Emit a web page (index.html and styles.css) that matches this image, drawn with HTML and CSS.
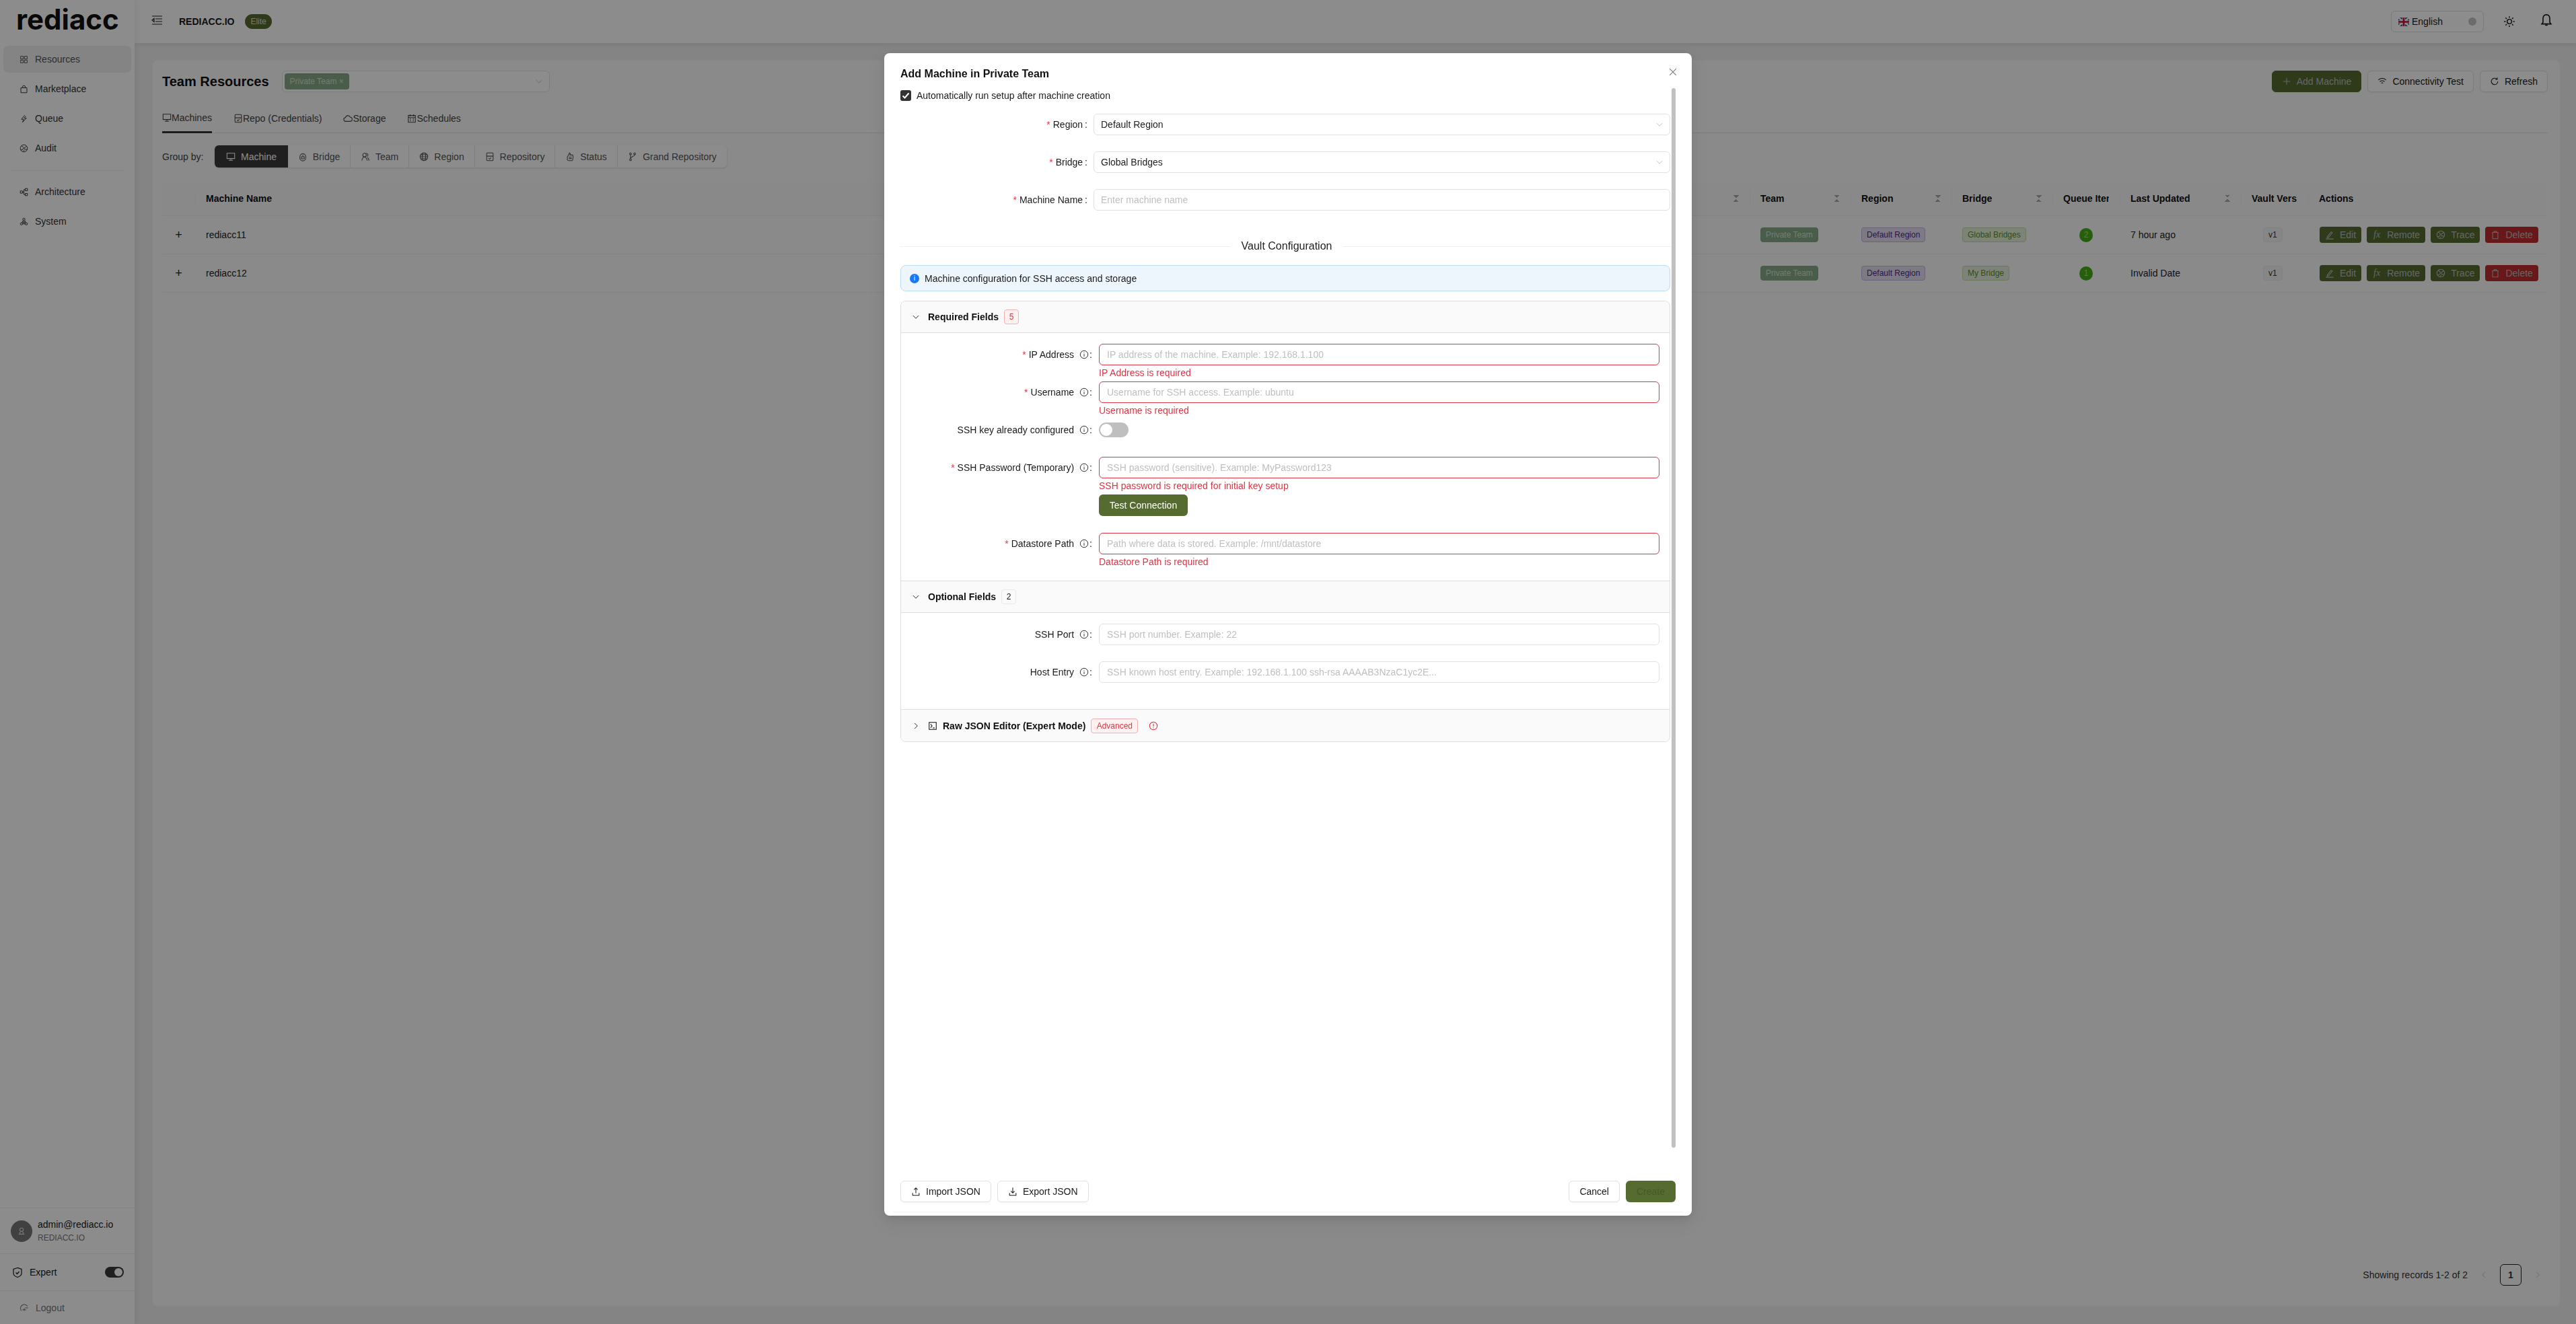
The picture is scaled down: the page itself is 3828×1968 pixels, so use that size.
FILE: index.html
```html
<!DOCTYPE html>
<html lang="en">
<head>
    <meta charset="UTF-8">
    <title>Rediacc - Team Resources</title>
    <link rel="stylesheet" href="styles.css">
</head>
<body>
    <svg class="icon-defs" xmlns="http://www.w3.org/2000/svg">
        <symbol id="i-grid" viewBox="0 0 16 16"><path d="M2 2h5v5H2zM9 2h5v5H9zM2 9h5v5H2zM9 9h5v5H9z"/></symbol>
        <symbol id="i-bag" viewBox="0 0 16 16"><path d="M2.500 5.500h11v9h-11zM5.500 5.500V4a2.500 2.500 0 0 1 5 0v1.500"/></symbol>
        <symbol id="i-bolt" viewBox="0 0 16 16"><path d="M9.500 1.500 3.500 9h4l-2 5.500L12.500 7h-4l3-4"/></symbol>
        <symbol id="i-swirl" viewBox="0 0 16 16"><circle cx="8" cy="8" r="6.500"/><path d="M3.500 3.500c3 1 4.500 3 3.500 5s-3 3-5 2M13.500 4c-2 1.500-4 1.500-4.500 3.500s2 3 5 2.500M7 14c0-1.500 1-2.500 2.500-3"/></symbol>
        <symbol id="i-partition" viewBox="0 0 16 16"><path d="M1.500 6h4v4h-4zM10.500 1.500h4v4h-4zM10.500 10.500h4v4h-4zM5.500 8H8M8 3.500v9M8 3.500h2.500M8 12.500h2.500"/></symbol>
        <symbol id="i-cluster" viewBox="0 0 16 16"><circle cx="8" cy="3.500" r="2"/><circle cx="3.500" cy="12" r="2"/><circle cx="12.500" cy="12" r="2"/><path d="M6.500 5.500 4.500 10M9.500 5.500l2 4.500M5.500 12h5M8 7l2 3H6z"/></symbol>
        <symbol id="i-desktop" viewBox="0 0 16 16"><path d="M1.500 2h13v9h-13zM8 11v3M4.500 14h7"/></symbol>
        <symbol id="i-bridge" viewBox="0 0 16 16"><path d="M3 8a5 5 0 0 1 10 0v2a5 5 0 0 1-10 0zM5.500 8h5v3.500h-5zM8 5v3"/></symbol>
        <symbol id="i-team" viewBox="0 0 16 16"><circle cx="6.500" cy="5" r="3"/><path d="M2 14.500c.5-3.500 2.500-6 4.500-6s4 2.500 4.500 6M9.500 2a3 3 0 0 1 1.500 5.500M11.500 9c1.500 1 2.300 3 2.500 5.500"/></symbol>
        <symbol id="i-globe" viewBox="0 0 16 16"><circle cx="8" cy="8" r="6.500"/><ellipse cx="8" cy="8" rx="3" ry="6.500"/><path d="M1.500 8h13M2.500 4.500h11M2.500 11.500h11"/></symbol>
        <symbol id="i-repo" viewBox="0 0 16 16"><path d="M4 1.500h8a1.500 1.500 0 0 1 1.500 1.500v10a1.500 1.500 0 0 1-1.500 1.500H4A1.500 1.500 0 0 1 2.500 13V3A1.500 1.500 0 0 1 4 1.500zM2.500 7h11M6 10.500l1.500 1.500L10 9.500"/></symbol>
        <symbol id="i-hand" viewBox="0 0 16 16"><path d="M3.500 8.500 6 4l1-2.500 1.500 1L8 5h4.500l1 3-1 5.500a1.500 1.500 0 0 1-1.500 1H5.500a2 2 0 0 1-2-2zM6 8.500h5M6 11h5"/></symbol>
        <symbol id="i-branch" viewBox="0 0 16 16"><circle cx="4.500" cy="3" r="1.500"/><circle cx="4.500" cy="13" r="1.500"/><circle cx="11.500" cy="3" r="1.500"/><path d="M4.500 4.500v7M11.500 4.500c0 3.500-7 3-7 6.500"/></symbol>
        <symbol id="i-cloud" viewBox="0 0 16 16"><path d="M4.500 13a3.250 3.250 0 0 1-.5-6.500 4.200 4.200 0 0 1 8-.5 3.500 3.500 0 0 1-.5 7z"/></symbol>
        <symbol id="i-calendar" viewBox="0 0 16 16"><path d="M2 3h12v11.500H2zM2 6.500h12M5 1v3.500M11 1v3.500M4.500 9h2M9.500 9h2M4.500 12h2M9.500 12h2"/></symbol>
        <symbol id="i-wifi" viewBox="0 0 16 16"><path d="M1.500 5.500a9.500 9.500 0 0 1 13 0M4 8.500a6 6 0 0 1 8 0M6.500 11a2.500 2.500 0 0 1 3 0"/></symbol>
        <symbol id="i-reload" viewBox="0 0 16 16"><path d="M13.500 8a5.500 5.500 0 1 1-1.600-3.900M12.500 1.500v3h-3"/></symbol>
        <symbol id="i-plus" viewBox="0 0 16 16"><path d="M8 2v12M2 8h12"/></symbol>
        <symbol id="i-edit" viewBox="0 0 16 16"><path d="M4 11 10.500 3l2 1.500L6 12.500l-2.500.5zM1.500 15h13"/></symbol>
        <symbol id="i-trash" viewBox="0 0 16 16"><path d="M2.500 4h11M6 4V2h4v2M3.500 4v10.500h9V4"/></symbol>
        <symbol id="i-info" viewBox="0 0 16 16"><circle cx="8" cy="8" r="6.500"/><path d="M8 7v4.500M8 4.500v1"/></symbol>
        <symbol id="i-warn" viewBox="0 0 16 16"><circle cx="8" cy="8" r="6.500"/><path d="M8 4v5M8 10.500v1.500"/></symbol>
        <symbol id="i-sun" viewBox="0 0 16 16"><circle cx="8" cy="8" r="3"/><path d="M8 1v2M8 13v2M1 8h2M13 8h2M3 3l1.400 1.400M11.600 11.600 13 13M3 13l1.400-1.400M11.600 4.400 13 3"/></symbol>
        <symbol id="i-bell" viewBox="0 0 16 16"><path d="M8 1.500c-2.800 0-4 2-4 4.500v4.500L2.500 12.500h11L12 10.500V6c0-2.500-1.200-4.500-4-4.500zM6.500 14h3"/></symbol>
        <symbol id="i-down" viewBox="0 0 16 16"><path d="M2.500 5.500 8 11l5.500-5.500"/></symbol>
        <symbol id="i-right" viewBox="0 0 16 16"><path d="M5.500 2.500 11 8l-5.500 5.500"/></symbol>
        <symbol id="i-left" viewBox="0 0 16 16"><path d="M10.500 2.500 5 8l5.500 5.500"/></symbol>
        <symbol id="i-close" viewBox="0 0 16 16"><path d="M2.500 2.500l11 11M13.500 2.500l-11 11"/></symbol>
        <symbol id="i-user" viewBox="0 0 16 16"><circle cx="8" cy="5.500" r="3"/><path d="M6.500 8.500 4 13h8L9.500 8.500"/></symbol>
        <symbol id="i-shield" viewBox="0 0 16 16"><path d="M8 1 2 3v6c0 3 3 5 6 6 3-1 6-3 6-6V3zM5.500 8l2 2 3-3.500"/></symbol>
        <symbol id="i-logout" viewBox="0 0 16 16"><path d="M13.500 5A6.500 6.500 0 1 0 3 13M5 12c1-2 5-2 6 0M8 8.500v5M14.500 8h-5"/></symbol>
        <symbol id="i-upload" viewBox="0 0 16 16"><path d="M8 11V2M5 5l3-3 3 3M2.500 10.500v4h11v-4"/></symbol>
        <symbol id="i-download" viewBox="0 0 16 16"><path d="M8 1.500v9M5 7.500l3 3 3-3M2.500 10.500v4h11v-4"/></symbol>
        <symbol id="i-code" viewBox="0 0 16 16"><path d="M2 2h12v12H2zM4.500 5 7 8l-2.500 3M8 11.500h3.500"/></symbol>
    </svg>

    <div class="app">
        <aside class="sidebar">
            <div class="logo">rediacc</div>
            <nav class="nav">
                <a class="nav-item active"><svg class="ic"><use href="#i-grid"/></svg>Resources</a>
                <a class="nav-item"><svg class="ic"><use href="#i-bag"/></svg>Marketplace</a>
                <a class="nav-item"><svg class="ic"><use href="#i-bolt"/></svg>Queue</a>
                <a class="nav-item"><svg class="ic"><use href="#i-swirl"/></svg>Audit</a>
                <div class="nav-divider"></div>
                <a class="nav-item"><svg class="ic"><use href="#i-partition"/></svg>Architecture</a>
                <a class="nav-item"><svg class="ic"><use href="#i-cluster"/></svg>System</a>
            </nav>
            <div class="side-foot">
                <div class="user-box">
                    <div class="avatar"><svg class="ic"><use href="#i-user"/></svg></div>
                    <div>
                        <div class="user-name">admin@rediacc.io</div>
                        <div class="user-org">REDIACC.IO</div>
                    </div>
                </div>
                <div class="expert-row">
                    <svg class="ic shield"><use href="#i-shield"/></svg>
                    <span>Expert</span>
                    <span class="mini-switch"></span>
                </div>
                <a class="logout"><svg class="ic"><use href="#i-logout"/></svg>Logout</a>
            </div>
        </aside>

        <div class="right">
            <header class="topbar">
                <svg class="hamburger" viewBox="0 0 16 14"><path d="M1 1h15M6 5h10M6 9h10M1 13h15M4 4.500 1 7l3 2.500z"/></svg>
                <strong class="org">REDIACC.IO</strong>
                <span class="elite">Elite</span>
                <div class="top-tools">
                    <div class="lang">
                        <svg class="flag" viewBox="0 0 18 14"><rect width="18" height="14" fill="#22357e"/><path d="M0 0l18 14M18 0 0 14" stroke="#fff" stroke-width="3"/><path d="M9 0v14M0 7h18" stroke="#fff" stroke-width="5"/><path d="M9 0v14M0 7h18" stroke="#c8102e" stroke-width="3"/></svg>
                        <span>English</span>
                        <span class="lang-dot"></span>
                    </div>
                    <svg class="ic tool"><use href="#i-sun"/></svg>
                    <svg class="ic tool bell"><use href="#i-bell"/></svg>
                </div>
            </header>

            <main class="main">
                <section class="card">
                    <div class="card-head">
                        <h1>Team Resources</h1>
                        <div class="team-select">
                            <span class="team-tag">Private Team ×</span>
                            <svg class="ic chev"><use href="#i-down"/></svg>
                        </div>
                        <div class="head-actions">
                            <button class="btn primary"><svg class="ic"><use href="#i-plus"/></svg>Add Machine</button>
                            <button class="btn"><svg class="ic"><use href="#i-wifi"/></svg>Connectivity Test</button>
                            <button class="btn"><svg class="ic"><use href="#i-reload"/></svg>Refresh</button>
                        </div>
                    </div>

                    <div class="tabs">
                        <a class="tab active"><svg class="ic"><use href="#i-desktop"/></svg>Machines</a>
                        <a class="tab"><svg class="ic"><use href="#i-repo"/></svg>Repo (Credentials)</a>
                        <a class="tab"><svg class="ic"><use href="#i-cloud"/></svg>Storage</a>
                        <a class="tab"><svg class="ic"><use href="#i-calendar"/></svg>Schedules</a>
                    </div>

                    <div class="group-row">
                        <span class="group-label">Group by:</span>
                        <div class="segments">
                            <a class="seg active seg-machine"><svg class="ic"><use href="#i-desktop"/></svg>Machine</a>
                            <a class="seg seg-bridge"><svg class="ic"><use href="#i-bridge"/></svg>Bridge</a>
                            <a class="seg seg-team"><svg class="ic"><use href="#i-team"/></svg>Team</a>
                            <a class="seg seg-region"><svg class="ic"><use href="#i-globe"/></svg>Region</a>
                            <a class="seg seg-repo"><svg class="ic"><use href="#i-repo"/></svg>Repository</a>
                            <a class="seg seg-status"><svg class="ic"><use href="#i-hand"/></svg>Status</a>
                            <a class="seg seg-grand"><svg class="ic"><use href="#i-branch"/></svg>Grand Repository</a>
                        </div>
                    </div>

                    <div class="table">
                        <div class="tr th">
                            <div></div>
                            <div class="td between">Machine Name<span class="sort"></span></div>
                            <div class="td between">Team<span class="sort"></span></div>
                            <div class="td between">Region<span class="sort"></span></div>
                            <div class="td between">Bridge<span class="sort"></span></div>
                            <div class="td"><span class="clip clip-queue">Queue Items</span></div>
                            <div class="td between">Last Updated<span class="sort"></span></div>
                            <div class="td"><span class="clip clip-vault">Vault Version</span></div>
                            <div class="td">Actions</div>
                        </div>
                        <div class="tr">
                            <div class="td expand">+</div>
                            <div class="td">rediacc11</div>
                            <div class="td"><span class="tag tag-team">Private Team</span></div>
                            <div class="td"><span class="tag tag-region">Default Region</span></div>
                            <div class="td"><span class="tag tag-bridge">Global Bridges</span></div>
                            <div class="td"><span class="count">2</span></div>
                            <div class="td">7 hour ago</div>
                            <div class="td"><span class="tag tag-ver">v1</span></div>
                            <div class="td actions">
                                <button class="act"><svg class="ic"><use href="#i-edit"/></svg>Edit</button>
                                <button class="act"><i class="fx">fx</i>Remote</button>
                                <button class="act"><svg class="ic"><use href="#i-swirl"/></svg>Trace</button>
                                <button class="act danger"><svg class="ic"><use href="#i-trash"/></svg>Delete</button>
                            </div>
                        </div>
                        <div class="tr">
                            <div class="td expand">+</div>
                            <div class="td">rediacc12</div>
                            <div class="td"><span class="tag tag-team">Private Team</span></div>
                            <div class="td"><span class="tag tag-region">Default Region</span></div>
                            <div class="td"><span class="tag tag-bridge">My Bridge</span></div>
                            <div class="td"><span class="count">1</span></div>
                            <div class="td">Invalid Date</div>
                            <div class="td"><span class="tag tag-ver">v1</span></div>
                            <div class="td actions">
                                <button class="act"><svg class="ic"><use href="#i-edit"/></svg>Edit</button>
                                <button class="act"><i class="fx">fx</i>Remote</button>
                                <button class="act"><svg class="ic"><use href="#i-swirl"/></svg>Trace</button>
                                <button class="act danger"><svg class="ic"><use href="#i-trash"/></svg>Delete</button>
                            </div>
                        </div>
                    </div>

                    <div class="pager">
                        <span class="pager-text">Showing records 1-2 of 2</span>
                        <svg class="ic pager-arrow"><use href="#i-left"/></svg>
                        <span class="page-num">1</span>
                        <svg class="ic pager-arrow"><use href="#i-right"/></svg>
                    </div>
                </section>
            </main>
        </div>
    </div>

    <!-- Add machine modal -->
    <div class="overlay">
        <div class="modal">
            <div class="modal-title">Add Machine in Private Team</div>
            <svg class="ic modal-close"><use href="#i-close"/></svg>
            <div class="scroll-thumb"></div>

            <div class="modal-body">
                <label class="auto-setup">
                    <span class="checkbox"><svg viewBox="0 0 16 16"><path d="M3.500 8.500 6.500 11.500 12.500 4.500"/></svg></span>
                    Automatically run setup after machine creation
                </label>

                <div class="row">
                    <div class="row-label"><span class="req">*</span>Region<span class="colon">:</span></div>
                    <div class="control select">Default Region<svg class="ic chev"><use href="#i-down"/></svg></div>
                </div>
                <div class="row">
                    <div class="row-label"><span class="req">*</span>Bridge<span class="colon">:</span></div>
                    <div class="control select">Global Bridges<svg class="ic chev"><use href="#i-down"/></svg></div>
                </div>
                <div class="row">
                    <div class="row-label"><span class="req">*</span>Machine Name<span class="colon">:</span></div>
                    <input class="control" placeholder="Enter machine name">
                </div>

                <div class="vault-divider"><span>Vault Configuration</span></div>

                <div class="alert">
                    <span class="alert-icon">i</span>
                    Machine configuration for SSH access and storage
                </div>

                <div class="collapse">
                    <div class="panel-head">
                        <svg class="ic panel-arrow"><use href="#i-down"/></svg>
                        <strong>Required Fields</strong>
                        <span class="badge badge-red">5</span>
                    </div>
                    <div class="panel-body">
                        <div class="field has-error">
                            <div class="row-label"><span class="req">*</span>IP Address<svg class="ic info"><use href="#i-info"/></svg><span class="colon">:</span></div>
                            <div class="field-main">
                                <input class="control invalid" placeholder="IP address of the machine. Example: 192.168.1.100">
                                <div class="error">IP Address is required</div>
                            </div>
                        </div>
                        <div class="field has-error">
                            <div class="row-label"><span class="req">*</span>Username<svg class="ic info"><use href="#i-info"/></svg><span class="colon">:</span></div>
                            <div class="field-main">
                                <input class="control invalid" placeholder="Username for SSH access. Example: ubuntu">
                                <div class="error">Username is required</div>
                            </div>
                        </div>
                        <div class="field">
                            <div class="row-label">SSH key already configured<svg class="ic info"><use href="#i-info"/></svg><span class="colon">:</span></div>
                            <div class="field-main switch-wrap"><span class="switch"></span></div>
                        </div>
                        <div class="field password-field">
                            <div class="row-label"><span class="req">*</span>SSH Password (Temporary)<svg class="ic info"><use href="#i-info"/></svg><span class="colon">:</span></div>
                            <div class="field-main">
                                <input class="control invalid" placeholder="SSH password (sensitive). Example: MyPassword123">
                                <div class="error">SSH password is required for initial key setup</div>
                                <button class="test-btn">Test Connection</button>
                            </div>
                        </div>
                        <div class="field has-error">
                            <div class="row-label"><span class="req">*</span>Datastore Path<svg class="ic info"><use href="#i-info"/></svg><span class="colon">:</span></div>
                            <div class="field-main">
                                <input class="control invalid" placeholder="Path where data is stored. Example: /mnt/datastore">
                                <div class="error">Datastore Path is required</div>
                            </div>
                        </div>
                    </div>

                    <div class="panel-head">
                        <svg class="ic panel-arrow"><use href="#i-down"/></svg>
                        <strong>Optional Fields</strong>
                        <span class="badge">2</span>
                    </div>
                    <div class="panel-body">
                        <div class="field">
                            <div class="row-label">SSH Port<svg class="ic info"><use href="#i-info"/></svg><span class="colon">:</span></div>
                            <div class="field-main"><input class="control" placeholder="SSH port number. Example: 22"></div>
                        </div>
                        <div class="field">
                            <div class="row-label">Host Entry<svg class="ic info"><use href="#i-info"/></svg><span class="colon">:</span></div>
                            <div class="field-main"><input class="control" placeholder="SSH known host entry. Example: 192.168.1.100 ssh-rsa AAAAB3NzaC1yc2E..."></div>
                        </div>
                    </div>

                    <div class="panel-head panel-last">
                        <svg class="ic panel-arrow"><use href="#i-right"/></svg>
                        <svg class="ic json-icon"><use href="#i-code"/></svg>
                        <strong>Raw JSON Editor (Expert Mode)</strong>
                        <span class="badge badge-red badge-wide">Advanced</span>
                        <svg class="ic warn"><use href="#i-warn"/></svg>
                    </div>
                </div>
            </div>

            <div class="modal-foot">
                <div class="foot-group">
                    <button class="btn"><svg class="ic"><use href="#i-upload"/></svg>Import JSON</button>
                    <button class="btn"><svg class="ic"><use href="#i-download"/></svg>Export JSON</button>
                </div>
                <div class="foot-group">
                    <button class="btn">Cancel</button>
                    <button class="btn create">Create</button>
                </div>
            </div>
        </div>
    </div>
</body>
</html>
```

FILE: styles.css
```css
/* Global Styles */
* {
    box-sizing: border-box;
}

body {
    margin: 0;
    height: 1968px;
    overflow: hidden;
    font-family: "Liberation Sans", Arial, sans-serif;
    font-size: 14px;
    color: #1a1a1a;
    background-color: #f0f0f0;
}

.icon-defs {
    display: none;
}

.ic {
    width: 14px;
    height: 14px;
    flex: none;
    fill: none;
    stroke: currentColor;
    stroke-width: 1.2;
}

.app {
    display: flex;
    height: 100%;
}

/* Sidebar */
.sidebar {
    width: 200px;
    flex: none;
    display: flex;
    flex-direction: column;
    background-color: #fff;
    box-shadow: 2px 0 8px rgba(0, 0, 0, 0.06);
    z-index: 2;
}

.logo {
    height: 64px;
    padding-left: 24px;
    font-family: Inter, sans-serif;
    font-size: 42px;
    font-weight: 700;
    line-height: 58px;
    letter-spacing: 0;
    color: #111;
}

.nav {
    flex: 1;
    padding: 4px 5px 0;
}

.nav-item {
    display: flex;
    align-items: center;
    gap: 10px;
    height: 40px;
    margin-bottom: 4px;
    padding-left: 24px;
    border-radius: 8px;
    color: #333;
}

.nav-item .ic {
    width: 13px;
    height: 13px;
}

.nav-item.active {
    background-color: #f1f1f1;
    color: #555;
}

.nav-divider {
    height: 1px;
    margin: 13px 11px 11px;
    background-color: #eee;
}

.side-foot {
    height: 173px;
    display: flex;
    flex-direction: column;
}

.user-box {
    height: 69px;
    display: flex;
    align-items: center;
    gap: 8px;
    padding-left: 16px;
    border-top: 1px solid #f0f0f0;
    border-bottom: 1px solid #f0f0f0;
}

.avatar {
    width: 32px;
    height: 32px;
    display: flex;
    align-items: center;
    justify-content: center;
    border-radius: 50%;
    background-color: #777;
    color: #ddd;
}

.user-org {
    margin-top: 5px;
    font-size: 12px;
    color: #777;
}

.expert-row {
    height: 55px;
    display: flex;
    align-items: center;
    gap: 10px;
    padding: 0 16px 0 18px;
    border-bottom: 1px solid #f0f0f0;
}

.shield {
    width: 16px;
    height: 21px;
}

.mini-switch {
    position: relative;
    width: 28px;
    height: 16px;
    margin-left: auto;
    border-radius: 8px;
    background-color: #3a3a3a;
}

.mini-switch::after {
    content: "";
    position: absolute;
    top: 2px;
    right: 2px;
    width: 12px;
    height: 12px;
    border-radius: 50%;
    background-color: #fff;
}

.logout {
    display: flex;
    align-items: center;
    gap: 10px;
    padding: 17px 0 0 29px;
    color: #777;
}

/* Top bar */
.right {
    flex: 1;
    min-width: 0;
    display: flex;
    flex-direction: column;
}

.topbar {
    height: 64px;
    flex: none;
    display: flex;
    align-items: center;
    padding: 0 34px 0 25px;
    background-color: #fff;
    box-shadow: 0 2px 8px rgba(0, 0, 0, 0.08);
    z-index: 1;
}

.hamburger {
    width: 16px;
    height: 14px;
    margin-bottom: 4px;
    fill: none;
    stroke: #222;
    stroke-width: 1.2;
}

.org {
    margin-left: 25px;
}

.elite {
    height: 22px;
    margin-left: 16px;
    padding: 0 8px;
    border-radius: 11px;
    font-size: 12px;
    line-height: 22px;
    background-color: #556b2f;
    color: #ddd;
}

.top-tools {
    margin-left: auto;
    display: flex;
    align-items: center;
}

.lang {
    width: 138px;
    height: 32px;
    display: flex;
    align-items: center;
    gap: 4px;
    padding: 0 10px;
    border: 1px solid #e2e2e2;
    border-radius: 6px;
}

.flag {
    width: 16px;
    height: 13px;
}

.lang-dot {
    width: 12px;
    height: 12px;
    margin-left: auto;
    border-radius: 50%;
    background-color: #c4c4c4;
}

.tool {
    width: 18px;
    height: 18px;
    margin-left: 29px;
    stroke-width: 1.3;
}

.bell {
    width: 20px;
    height: 22px;
    margin-left: 36px;
    margin-bottom: 4px;
}

/* Main card */
.main {
    flex: 1;
    min-height: 0;
    padding: 25px 23px 26px 26px;
}

.card {
    height: 100%;
    display: flex;
    flex-direction: column;
    padding: 15px 18px 0 14px;
    border: 1px solid #f4f4f4;
    border-radius: 8px;
    background-color: #fbfbfb;
}

.card-head {
    display: flex;
    align-items: center;
    height: 32px;
}

h1 {
    margin: 0;
    font-size: 20px;
    font-weight: 700;
    color: #111;
}

.team-select {
    width: 398px;
    height: 32px;
    display: flex;
    align-items: center;
    justify-content: space-between;
    margin-left: 19px;
    padding: 0 9px 0 3px;
    border: 1px solid #e4e4e4;
    border-radius: 6px;
    background-color: #fff;
}

.team-tag {
    height: 24px;
    padding: 0 8px;
    border-radius: 4px;
    font-size: 12px;
    line-height: 24px;
    background-color: #88aa88;
    color: #cfe2cf;
}

.chev {
    width: 12px;
    height: 12px;
    color: #bbb;
}

.head-actions {
    margin-left: auto;
    display: flex;
    gap: 9px;
}

.btn {
    height: 32px;
    display: inline-flex;
    align-items: center;
    gap: 8px;
    padding: 0 15px;
    border: 1px solid #e0e0e0;
    border-radius: 6px;
    font: inherit;
    color: #1a1a1a;
    background-color: #fff;
    box-shadow: 0 2px 0 rgba(0, 0, 0, 0.02);
}

.head-actions .btn {
    padding: 0 14px;
}

.btn.primary {
    border-color: #556b2f;
    background-color: #556b2f;
    color: #bbb;
}

/* Tabs */
.tabs {
    display: flex;
    gap: 32px;
    height: 43px;
    margin-top: 18px;
    border-bottom: 1px solid #e4e4e4;
}

.tab {
    display: flex;
    align-items: center;
    height: 43px;
    padding-bottom: 1px;
    color: #444;
}

.tab.active {
    border-bottom: 3px solid #333;
}

/* Group by */
.group-row {
    display: flex;
    align-items: center;
    gap: 16px;
    height: 33px;
    margin-top: 18px;
}

.group-label {
    width: 62px;
    color: #444;
}

.segments {
    display: flex;
    align-items: center;
    height: 33px;
    border-radius: 6px;
    background-color: #fff;
    box-shadow: 0 1px 3px rgba(0, 0, 0, 0.12);
    color: #555;
}

.seg {
    height: 33px;
    display: flex;
    align-items: center;
    justify-content: center;
    gap: 8px;
    border-left: 1px solid #e6e6e6;
}

.seg.active {
    border-left: 0;
    border-radius: 6px 0 0 6px;
    background-color: #3a3a3a;
    color: #fff;
}

.seg-machine { width: 109px; }
.seg-bridge { width: 92px; border-left: 0; }
.seg-team { width: 87px; }
.seg-region { width: 98px; }
.seg-repo { width: 119px; }
.seg-status { width: 93px; }
.seg-grand { width: 163px; }

/* Table */
.table {
    margin-top: 21px;
    width: 3544px;
}

.tr {
    display: grid;
    grid-template-columns: 49px 2310px 150px 150px 150px 100px 180px 100px 355px;
    height: 57px;
    border-bottom: 1px solid #efefef;
    align-items: center;
}

.tr.th {
    height: 51px;
    font-weight: 700;
    background-color: #fafafa;
    color: #111;
}

.td {
    padding: 0 16px;
    min-width: 0;
    display: flex;
    align-items: center;
    color: #222;
}

.th .td {
    height: 22px;
    padding-left: 15px;
    color: #111;
    border-left: 1px solid #f2f2f2;
}

.between {
    justify-content: space-between;
}

.expand {
    justify-content: center;
    padding: 0;
    font-size: 18px;
    font-weight: 400;
}

.clip {
    overflow: hidden;
    white-space: nowrap;
}

.clip-queue { width: 69px; }
.clip-vault { width: 67px; }

.sort {
    width: 8px;
    height: 18px;
    flex: none;
    background:
        linear-gradient(45deg, transparent 50%, #aaa 50%) 0 0 / 4px 4px no-repeat,
        linear-gradient(-45deg, transparent 50%, #aaa 50%) 4px 0 / 4px 4px no-repeat,
        linear-gradient(135deg, transparent 50%, #aaa 50%) 0 100% / 4px 4px no-repeat,
        linear-gradient(-135deg, transparent 50%, #aaa 50%) 4px 100% / 4px 4px no-repeat;
    background-position: 0 4px, 4px 4px, 0 10px, 4px 10px;
}

.tag {
    height: 22px;
    padding: 0 7px;
    border: 1px solid;
    border-radius: 4px;
    font-size: 12px;
    line-height: 20px;
    white-space: nowrap;
}

.tag-team {
    border-color: #88aa88;
    background-color: #88aa88;
    color: #cfe2cf;
}

.tag-region {
    border-color: #c7b3e0;
    background-color: #e6dff0;
    color: #4b2a8a;
}

.tag-bridge {
    border-color: #c3dba5;
    background-color: #e6efdc;
    color: #5a8f20;
}

.tag-ver {
    margin-left: 17px;
    border-color: #ececec;
    background-color: #f5f5f5;
    color: #333;
}

.count {
    width: 20px;
    height: 21px;
    margin-left: 24px;
    border-radius: 50%;
    font-size: 12px;
    line-height: 21px;
    text-align: center;
    background-color: #45ad16;
    color: #a8dc8c;
}

.actions {
    gap: 8px;
    padding-left: 17px;
}

.act {
    height: 24px;
    display: inline-flex;
    align-items: center;
    gap: 8px;
    padding: 0 8px;
    border: 0;
    border-radius: 4px;
    font: inherit;
    background-color: #556b2f;
    color: #bbb;
}

.act.danger {
    background-color: #bd2c2c;
}

.fx {
    width: 14px;
    font-family: "Liberation Serif", serif;
}

/* Pagination */
.pager {
    margin-top: auto;
    height: 62px;
    display: flex;
    align-items: flex-start;
    justify-content: flex-end;
    padding-right: 9px;
    color: #333;
}

.pager-text {
    line-height: 32px;
    margin-right: 18px;
}

.pager-arrow {
    width: 12px;
    height: 32px;
    color: #bbb;
}

.page-num {
    width: 32px;
    height: 32px;
    margin: 0 18px;
    border: 1px solid #222;
    border-radius: 6px;
    font-weight: 700;
    line-height: 30px;
    text-align: center;
}

/* Modal */
.overlay {
    position: fixed;
    inset: 0;
    z-index: 10;
    display: flex;
    justify-content: center;
    align-items: flex-start;
    padding-top: 79px;
    background-color: rgba(0, 0, 0, 0.45);
}

.modal {
    position: relative;
    width: 1200px;
    height: 1728px;
    display: flex;
    flex-direction: column;
    padding: 20px 24px 5px;
    border-radius: 8px;
    background-color: #fff;
    box-shadow: 0 6px 16px rgba(0, 0, 0, 0.08), 0 9px 28px 8px rgba(0, 0, 0, 0.05), 0 3px 6px -4px rgba(0, 0, 0, 0.12);
}

.modal-title {
    height: 22px;
    margin-bottom: 10px;
    font-size: 16px;
    font-weight: 700;
    line-height: 22px;
    color: #111;
}

.modal-close {
    position: absolute;
    top: 21px;
    right: 21px;
    width: 14px;
    height: 14px;
    color: #777;
}

.scroll-thumb {
    position: absolute;
    top: 52px;
    right: 24px;
    width: 6px;
    height: 1575px;
    border-radius: 3px;
    background-color: #c1c1c1;
}

.modal-body {
    flex: 1;
    min-height: 0;
    padding-right: 8px;
}

.auto-setup {
    display: flex;
    align-items: center;
    gap: 8px;
    height: 16px;
    margin: 3px 0 19px;
}

.checkbox {
    width: 16px;
    height: 16px;
    border-radius: 3px;
    background-color: #333;
}

.checkbox svg {
    display: block;
    fill: none;
    stroke: #fff;
    stroke-width: 2;
}

.row {
    display: grid;
    grid-template-columns: 278px 1fr;
    column-gap: 9px;
    margin-bottom: 24px;
    align-items: center;
}

.row-label {
    display: flex;
    align-items: center;
    justify-content: flex-end;
    height: 32px;
    color: #1a1a1a;
    white-space: nowrap;
}

.req {
    margin-right: 4px;
    color: #dc3545;
}

.colon {
    margin-left: 1px;
}

.row .colon {
    margin-left: 3px;
}

.control {
    display: block;
    width: 100%;
    height: 32px;
    padding: 0 10px;
    border: 1px solid #e2e2e2;
    border-radius: 6px;
    font: inherit;
    line-height: 30px;
    color: #222;
    background-color: #fff;
    outline: none;
}

.field .control {
    padding: 0 11px;
}

.control::placeholder {
    color: #bfbfbf;
}

.control.invalid {
    border-color: #dc3545;
}

.select {
    display: flex;
    align-items: center;
    justify-content: space-between;
}

.select .chev {
    margin-right: -1px;
}

.vault-divider {
    display: flex;
    align-items: center;
    gap: 16px;
    height: 22px;
    margin: 42px -4px 17px 0;
    font-size: 16px;
    color: #222;
}

.vault-divider::before,
.vault-divider::after {
    content: "";
    flex: 1;
    height: 1px;
    background-color: #f0f0f0;
}

.alert {
    display: flex;
    align-items: center;
    gap: 8px;
    height: 39px;
    margin-bottom: 14px;
    padding-left: 13px;
    border: 1px solid #bcdcf5;
    border-radius: 8px;
    background-color: #eef6fd;
}

.alert-icon {
    width: 14px;
    height: 14px;
    border-radius: 50%;
    font-size: 10px;
    line-height: 14px;
    text-align: center;
    color: #fff;
    background-color: #1677ff;
}

.collapse {
    border: 1px solid #dedede;
    border-radius: 8px;
    overflow: hidden;
}

.panel-head {
    display: flex;
    align-items: center;
    height: 47px;
    padding-left: 16px;
    background-color: #fafafa;
    border-bottom: 1px solid #dedede;
    color: #111;
}

.panel-arrow {
    width: 12px;
    height: 12px;
    margin-right: 12px;
}

.panel-last {
    border-bottom: 0;
}

.json-icon {
    margin-right: 8px;
}

.badge {
    width: 22px;
    height: 22px;
    margin-left: 8px;
    border: 1px solid #e8e8e8;
    border-radius: 4px;
    font-size: 12px;
    line-height: 20px;
    text-align: center;
    background-color: #fafafa;
}

.badge-red {
    border-color: #f1aeb5;
    background-color: #fff1f0;
    color: #dc3545;
}

.badge-wide {
    width: 70px;
}

.warn {
    margin-left: 16px;
    color: #dc3545;
}

.panel-body {
    padding: 16px 15px 15px 15px;
    border-bottom: 1px solid #dedede;
}

.field {
    display: grid;
    grid-template-columns: 269px 833px;
    column-gap: 10px;
    margin-bottom: 24px;
}

.field.has-error {
    margin-bottom: 2px;
}

.password-field {
    margin-bottom: 25px;
}

.info {
    margin-left: 8px;
    stroke-width: 1;
}

.error {
    height: 22px;
    font-size: 14px;
    line-height: 22px;
    color: #dc3545;
}

.switch-wrap {
    height: 32px;
    display: flex;
    align-items: center;
}

.switch {
    position: relative;
    width: 44px;
    height: 22px;
    border-radius: 11px;
    background-color: #bfbfbf;
}

.switch::after {
    content: "";
    position: absolute;
    top: 2px;
    left: 2px;
    width: 18px;
    height: 18px;
    border-radius: 50%;
    background-color: #fff;
}

.test-btn {
    display: block;
    width: 132px;
    height: 32px;
    margin-top: 2px;
    border: 0;
    border-radius: 6px;
    font: inherit;
    color: #fff;
    background-color: #556b2f;
}

.modal-foot {
    display: flex;
    justify-content: space-between;
    margin: 0 -11px;
    padding: 0 11px 14px;
    border-bottom: 1px solid #f2f2f2;
}

.foot-group {
    display: flex;
    gap: 9px;
}

.btn.create {
    border: 0;
    padding: 0 16px;
    background-color: #556b2f;
    color: #46582a;
}
```
